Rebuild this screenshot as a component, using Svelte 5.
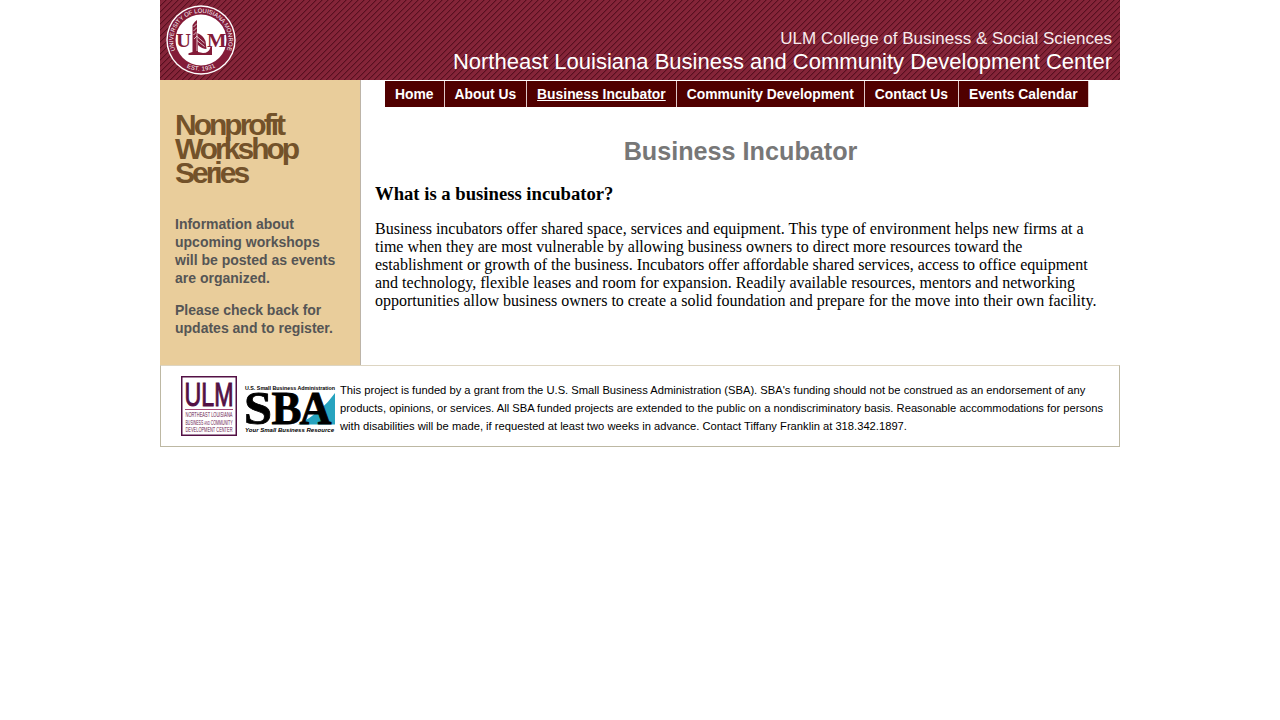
<script>
  const nav = ['Home', 'About Us', 'Business Incubator', 'Community Development', 'Contact Us', 'Events Calendar'];
</script>

<div class="page">
  <header>
    <svg class="stripes" width="960" height="80" aria-hidden="true">
      <defs>
        <pattern id="diag" width="6" height="6" patternUnits="userSpaceOnUse" shape-rendering="crispEdges">
          <rect width="6" height="6" fill="#852539" />
          <path fill="#571020" d="M5 0h1v1h-1zM4 1h1v1h-1zM3 2h1v1h-1zM2 3h1v1h-1zM1 4h1v1h-1zM0 5h1v1h-1z" />
          <path fill="#761c2f" d="M0 0h1v1h-1zM5 1h1v1h-1zM4 2h1v1h-1zM3 3h1v1h-1zM2 4h1v1h-1zM1 5h1v1h-1z" />
        </pattern>
      </defs>
      <rect width="960" height="80" fill="url(#diag)" />
    </svg>
    <svg class="seal" width="70" height="70" viewBox="0 0 70 70">
      <defs>
        <path id="ringTop" d="M9.2 45.5A27.7 27.7 0 1 1 60.8 45.5" />
        <path id="ringBottom" d="M12 55.7A31.4 31.4 0 0 0 58 55.7" />
      </defs>
      <circle cx="35" cy="35" r="34.7" fill="#fff" />
      <circle cx="35" cy="35" r="33.3" fill="#831b38" />
      <circle cx="35" cy="35" r="25.5" fill="#fff" />
      <text class="ring"><textPath href="#ringTop" startOffset="0" textLength="107" lengthAdjust="spacingAndGlyphs">UNIVERSITY OF LOUISIANA MONROE</textPath></text>
      <text class="ring"><textPath href="#ringBottom" startOffset="50%" text-anchor="middle" textLength="30">EST. 1931</textPath></text>
      <text class="mono" x="10" y="42" textLength="15" lengthAdjust="spacingAndGlyphs">U</text>
      <text class="mono" x="41" y="42" textLength="19.5" lengthAdjust="spacingAndGlyphs">M</text>
      <path fill="#831b38" d="M26.5 20Q29 16 31 15V28Q37 30 39.5 36L40.5 44Q36 44 32 40V47L37 48Q43 48 44.5 42H46V50H22.5V48.3L26.5 47Z" />
      <path stroke="#fff" fill="none" stroke-width=".7" d="M27.5 22L31 18.5M27.5 26L31 22.5M27.5 30L31 26.5M28 34L31 31M31 31.5L38.5 38M31 35.5L38.5 41.5M31 28V46" />
    </svg>
    <div class="titles">
      <div class="college">ULM College of Business &amp; Social Sciences</div>
      <div class="center">Northeast Louisiana Business and Community Development Center</div>
    </div>
  </header>

  <div class="body">
    <aside>
      <h2>Nonprofit<br />Workshop<br />Series</h2>
      <p>Information about<br />upcoming workshops<br />will be posted as events<br />are organized.</p>
      <p>Please check back for<br />updates and to register.</p>
    </aside>
    <main>
      <nav>
        {#each nav as item}
          <a href="#top" class:active={item === 'Business Incubator'}>{item}</a>
        {/each}
      </nav>
      <h1>Business Incubator</h1>
      <h3>What is a business incubator?</h3>
      <p>Business incubators offer shared space, services and equipment. This type of environment helps new firms at a<br />time when they are most vulnerable by allowing business owners to direct more resources toward the<br />establishment or growth of the business. Incubators offer affordable shared services, access to office equipment<br />and technology, flexible leases and room for expansion. Readily available resources, mentors and networking<br />opportunities allow business owners to create a solid foundation and prepare for the move into their own facility.</p>
    </main>
  </div>

  <footer>
    <svg class="ulm" width="56" height="60" viewBox="0 0 56 60">
      <rect x=".75" y=".75" width="54.5" height="58.5" fill="#fff" stroke="#531044" stroke-width="1.5" />
      <text x="3.5" y="29.5" font-size="33" stroke="#531044" stroke-width="1" textLength="49" lengthAdjust="spacingAndGlyphs">ULM</text>
      <path stroke="#a54878" stroke-width="1" d="M4 33.5H52" />
      <g fill="#6b2050">
        <text x="4.5" y="41.2" font-size="6.8" textLength="47" lengthAdjust="spacingAndGlyphs">NORTHEAST LOUISIANA</text>
        <text x="4.5" y="48.8" font-size="6.8" textLength="47" lengthAdjust="spacingAndGlyphs">BUSINESS <tspan font-size="5">AND</tspan> COMMUNITY</text>
        <text x="4.5" y="56.2" font-size="6.8" textLength="47" lengthAdjust="spacingAndGlyphs">DEVELOPMENT CENTER</text>
      </g>
    </svg>
    <svg class="sba" width="92" height="60" viewBox="0 0 92 60">
      <path fill="#27a3bf" d="M91 17V48.5H54Q77 37 91 17Z" />
      <text class="small" x="1" y="13.5" textLength="90" lengthAdjust="spacingAndGlyphs">U.S. Small Business Administration</text>
      <text class="big" x="0" y="47.5" textLength="28" lengthAdjust="spacingAndGlyphs">S</text>
      <text class="big" x="27.5" y="47.5" textLength="30" lengthAdjust="spacingAndGlyphs">B</text>
      <text class="big" x="55.5" y="47.5" textLength="32" lengthAdjust="spacingAndGlyphs">A</text>
      <text class="small it" x="1" y="55.5" textLength="89" lengthAdjust="spacingAndGlyphs">Your Small Business Resource</text>
    </svg>
    <p>This project is funded by a grant from the U.S. Small Business Administration (SBA). SBA's funding should not be construed as an endorsement of any<br />products, opinions, or services. All SBA funded projects are extended to the public on a nondiscriminatory basis. Reasonable accommodations for persons<br />with disabilities will be made, if requested at least two weeks in advance. Contact Tiffany Franklin at 318.342.1897.</p>
  </footer>
</div>

<style>
  :global(body) { background: #fff; margin: 0; }
  .page { width: 960px; margin: 0 auto; font-family: 'Liberation Sans', Arial, sans-serif; }
  header { position: relative; height: 80px; display: flex; justify-content: space-between; background: #832237; }
  .stripes { position: absolute; left: 0; top: 0; }
  .seal { position: relative; margin: 5px 0 0 6px; }
  .ring { fill: #fff; font: 6px 'Liberation Sans', sans-serif; }
  .mono { fill: #831b38; font: bold 19px 'Liberation Serif', serif; }
  .titles { position: relative; padding: 28px 8px 0 0; text-align: right; color: #fff; white-space: nowrap; }
  .college { font-size: 17px; line-height: 21px; color: #f8ecee; }
  .center { font-size: 22px; line-height: 25px; }
  .body { display: flex; height: 285px; }
  aside { box-sizing: border-box; width: 201px; padding: 33px 0 0 15px; background: #e9cd9b; border-right: 1px solid #bcb4a8; white-space: nowrap; }
  h2 { margin: 0 0 30px; font-size: 30px; line-height: 24px; letter-spacing: -3px; color: #73522a; }
  aside p { margin: 0 0 14px; font-size: 14px; line-height: 18px; font-weight: bold; color: #555; }
  main { flex: 1; padding: 1px 0 0 14px; white-space: nowrap; }
  nav { display: flex; margin-left: 10px; height: 26px; }
  nav a { padding: 0 10px; background: #500000; border-right: 1px solid #e0c8c8; color: #fff; font-size: 13.87px; line-height: 26px; font-weight: bold; text-decoration: none; }
  nav a.active { text-decoration: underline; }
  h1 { margin: 29px 14px 0 0; text-align: center; font-size: 25.2px; line-height: 30px; color: #777; }
  h3 { margin: 17px 0 0; font: bold 18.66px/22px 'Liberation Serif', serif; }
  main p { margin: 15px 0 0; font: 16px/18px 'Liberation Serif', serif; }
  footer { box-sizing: border-box; height: 82px; border: 1px solid #bdb8a3; border-top-color: #ddd5c2; display: flex; padding: 10px 0 0 20px; }
  .ulm { fill: #531044; flex: none; }
  .sba { margin-left: 7px; flex: none; }
  .small { font: bold 6px 'Liberation Sans', sans-serif; }
  .it { font-style: italic; }
  .big { font: bold 46px 'Liberation Serif', serif; stroke: #000; stroke-width: .8; }
  footer p { margin: 5px 0 0 4px; font-size: 11.2px; line-height: 18px; white-space: nowrap; }
</style>
